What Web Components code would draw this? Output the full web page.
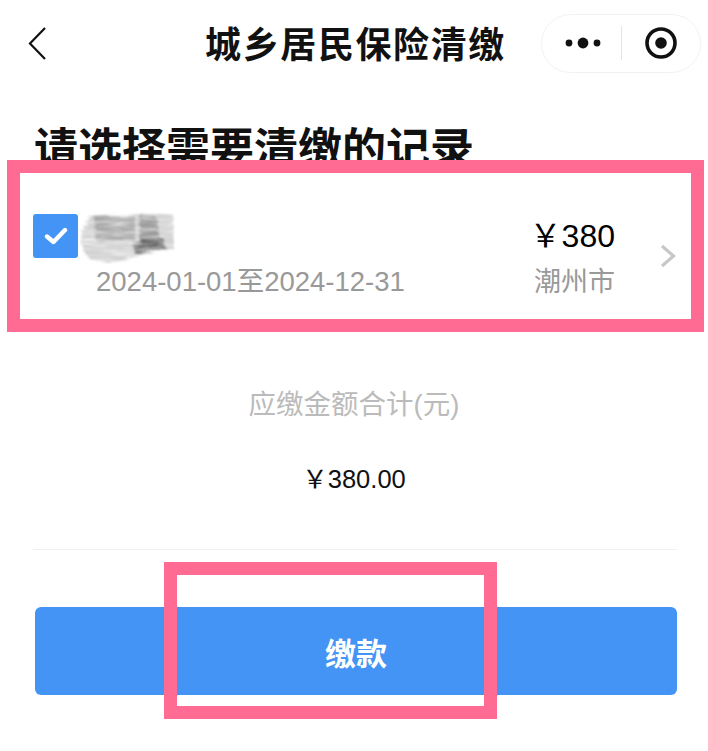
<!DOCTYPE html>
<html lang="zh">
<head>
<meta charset="utf-8">
<title>城乡居民保险清缴</title>
<style>
    html, body {
        margin: 0;
        background: #fff;
    }
    body {
        width: 708px;
        height: 751px;
        overflow: hidden;
        font-family: "Liberation Sans", "Noto Sans CJK SC", sans-serif;
    }
</style>
</head>
<body>
<nav-bar>城乡居民保险清缴</nav-bar>
<pay-page></pay-page>

<script>
class NavBar extends HTMLElement {
    constructor() {
        super();
        this.attachShadow({ mode: 'open' });
        this.shadowRoot.innerHTML = `
        <style>
            :host {
                display: grid;
                grid-template-columns: 1fr auto 1fr;
                align-items: center;
                height: 86px;
                padding: 0 7px 0 26px;
                box-sizing: border-box;
            }
            .title {
                font: 700 36px/44px "Noto Sans CJK SC", sans-serif;
                letter-spacing: 1.6px;
                color: #111;
                margin-top: -2px;
                transform: translateX(-8px);
            }
            .back {
                display: block;
            }
            .capsule {
                justify-self: end;
                display: flex;
                align-items: center;
                width: 160px;
                height: 59px;
                box-sizing: border-box;
                border: 1px solid #f2f2f2;
                border-radius: 30px;
            }
            .capsule > div {
                flex: 1;
                display: flex;
                justify-content: center;
            }
            .dots {
                margin-left: 4px;
            }
            .line {
                width: 1px;
                height: 34px;
                background: #e4e4e4;
            }
        </style>
        <svg class="back" width="24" height="40" viewBox="0 0 24 40">
            <path d="M19 5 L4 20.500 L19 36" fill="none" stroke="#111" stroke-width="2.200"/>
        </svg>
        <div class="title"><slot></slot></div>
        <div class="capsule">
            <div>
                <svg class="dots" width="36" height="14" viewBox="0 0 36 14">
                    <circle cx="4" cy="7" r="3.400" fill="#111"/>
                    <circle cx="18" cy="7" r="5.400" fill="#111"/>
                    <circle cx="32" cy="7" r="3.400" fill="#111"/>
                </svg>
            </div>
            <span class="line"></span>
            <div>
                <svg width="34" height="34" viewBox="0 0 34 34">
                    <circle cx="17" cy="17" r="14" fill="none" stroke="#111" stroke-width="3.600"/>
                    <circle cx="17" cy="17" r="5.800" fill="#111"/>
                </svg>
            </div>
        </div>`;
    }
}

class CheckBox extends HTMLElement {
    constructor() {
        super();
        this.attachShadow({ mode: 'open' });
        this.shadowRoot.innerHTML = `
        <style>
            :host {
                display: flex;
                align-items: center;
                justify-content: center;
                width: 45px;
                height: 44px;
                background: #4494f5;
                border-radius: 3px;
            }
        </style>
        <svg width="24" height="18" viewBox="0 0 24 18">
            <path d="M3 9.500 L9.500 15 L21 3" fill="none" stroke="#fff" stroke-width="4.400" stroke-linecap="round" stroke-linejoin="round"/>
        </svg>`;
    }
}

// the name is scrubbed out in the reference, so this is just grey streaks
class ScribbleMark extends HTMLElement {
    constructor() {
        super();
        this.attachShadow({ mode: 'open' });
        this.shadowRoot.innerHTML = `
        <style>
            :host {
                display: block;
                width: 96px;
                height: 54px;
            }
        </style>
        <svg width="96" height="54" viewBox="0 0 96 54">
            <defs>
                <filter id="streak" x="-5%" y="-5%" width="110%" height="110%" color-interpolation-filters="sRGB">
                    <feTurbulence type="fractalNoise" baseFrequency="0.035 0.45" numOctaves="3" seed="7" result="n"/>
                    <feColorMatrix in="n" type="matrix" values="0 0 0 0 0  0 0 0 0 0  0 0 0 0 0  2 0 0 0 -0.150" result="mask"/>
                    <feDisplacementMap in="SourceGraphic" in2="n" scale="8" result="edge"/>
                    <feComposite in="edge" in2="mask" operator="in"/>
                    <feGaussianBlur stdDeviation="0.800"/>
                </filter>
            </defs>
            <g filter="url(#streak)">
                <path d="M2 30 Q4 10 16 5 L94 4 L95 38 L72 44 L30 52 L12 50 Q3 42 2 30Z" fill="#d2d2d2"/>
                <path d="M16 6 L56 6 L56 30 L16 30Z" fill="#a8a8a8"/>
                <path d="M60 6 L78 8 L80 28 L60 30Z" fill="#9c9c9c"/>
                <path d="M54 33 L84 27 L86 38 L56 44Z" fill="#7c7c7c"/>
                <path d="M62 29 L80 30 L80 37 L60 39Z" fill="#505050"/>
            </g>
        </svg>`;
    }
}

class RecordRow extends HTMLElement {
    constructor() {
        super();
        this.attachShadow({ mode: 'open' });
        this.shadowRoot.innerHTML = `
        <style>
            :host {
                display: grid;
                grid-template-columns: 45px 2px 1fr auto 93px;
                grid-template-rows: 54px 30px;
                align-items: center;
                height: 84px;
                padding: 37px 0 0 33px;
                color: #000;
            }
            check-box {
                grid-area: 1 / 1;
                align-self: start;
                margin-top: 4px;
            }
            scribble-mark {
                grid-area: 1 / 3;
                margin-left: -1px;
            }
            .date {
                grid-area: 2 / 1 / 3 / 4;
                padding-left: 63px;
                font-size: 27.500px;
                color: #999;
            }
            .money {
                grid-area: 1 / 4;
                justify-self: end;
                margin-top: -2px;
                font-size: 32px;
                line-height: 40px;
                white-space: nowrap;
            }
            .city {
                grid-area: 2 / 4;
                justify-self: end;
                font-size: 27px;
                color: #999;
            }
            .arrow {
                grid-area: 1 / 5 / 3 / 6;
                justify-self: end;
                margin: 8px 31px 0 0;
            }
        </style>
        <check-box></check-box>
        <scribble-mark></scribble-mark>
        <div class="date">2024-01-01至2024-12-31</div>
        <div class="money">￥380</div>
        <div class="city">潮州市</div>
        <svg class="arrow" width="18" height="26" viewBox="0 0 18 26">
            <path d="M3 3 L14.500 13 L3 23" fill="none" stroke="#c8c8c8" stroke-width="3.200"/>
        </svg>`;
    }
}

class PayButton extends HTMLElement {
    constructor() {
        super();
        this.attachShadow({ mode: 'open' });
        this.shadowRoot.innerHTML = `
        <style>
            :host {
                display: flex;
                align-items: center;
                justify-content: center;
                height: 88px;
                background: #4494f5;
                border-radius: 6px;
                color: #fff;
                font: 700 31px "Noto Sans CJK SC", sans-serif;
            }
        </style>
        <slot></slot>`;
    }
}

class MarkBox extends HTMLElement {
    constructor() {
        super();
        this.attachShadow({ mode: 'open' });
        this.shadowRoot.innerHTML = `
        <style>
            :host {
                position: absolute;
                box-sizing: border-box;
                border: 13px solid #ff6b93;
            }
        </style>`;
    }
}

class PayPage extends HTMLElement {
    constructor() {
        super();
        this.attachShadow({ mode: 'open' });
        this.shadowRoot.innerHTML = `
        <style>
            :host {
                display: block;
                position: relative;
                height: 665px;
            }
            h1 {
                margin: 0;
                padding: 34px 0 0 34px;
                height: 53px;
                font: 700 44px/52px "Noto Sans CJK SC", sans-serif;
                color: #111;
            }
            .total {
                margin-top: 64px;
                text-align: center;
                font-size: 27.500px;
                line-height: 36px;
                color: #bbb;
            }
            .sum {
                margin-top: 38px;
                text-align: center;
                font-size: 25.500px;
                line-height: 36px;
                color: #111;
            }
            hr {
                margin: 52px 31px 0 33px;
                border: 0;
                border-top: 1px solid #f0f0f0;
            }
            pay-button {
                margin: 57px 31px 0 35px;
            }
            .m1 {
                left: 7px;
                top: 74px;
                width: 697px;
                height: 172px;
            }
            .m2 {
                left: 164px;
                top: 476px;
                width: 333px;
                height: 157px;
            }
            .cover {
                position: absolute;
                left: 7px;
                top: 74px;
                width: 697px;
                height: 172px;
                background: #fff;
            }
            .row-wrap {
                position: relative;
                height: 150px;
            }
        </style>
        <h1>请选择需要清缴的记录</h1>
        <div class="cover"></div>
        <mark-box class="m1"></mark-box>
        <div class="row-wrap"><record-row></record-row></div>
        <div class="total">应缴金额合计(元)</div>
        <div class="sum">￥380.00</div>
        <hr>
        <pay-button>缴款</pay-button>
        <mark-box class="m2"></mark-box>`;
    }
}

customElements.define('check-box', CheckBox);
customElements.define('scribble-mark', ScribbleMark);
customElements.define('record-row', RecordRow);
customElements.define('pay-button', PayButton);
customElements.define('mark-box', MarkBox);
customElements.define('nav-bar', NavBar);
customElements.define('pay-page', PayPage);
</script>
</body>
</html>
